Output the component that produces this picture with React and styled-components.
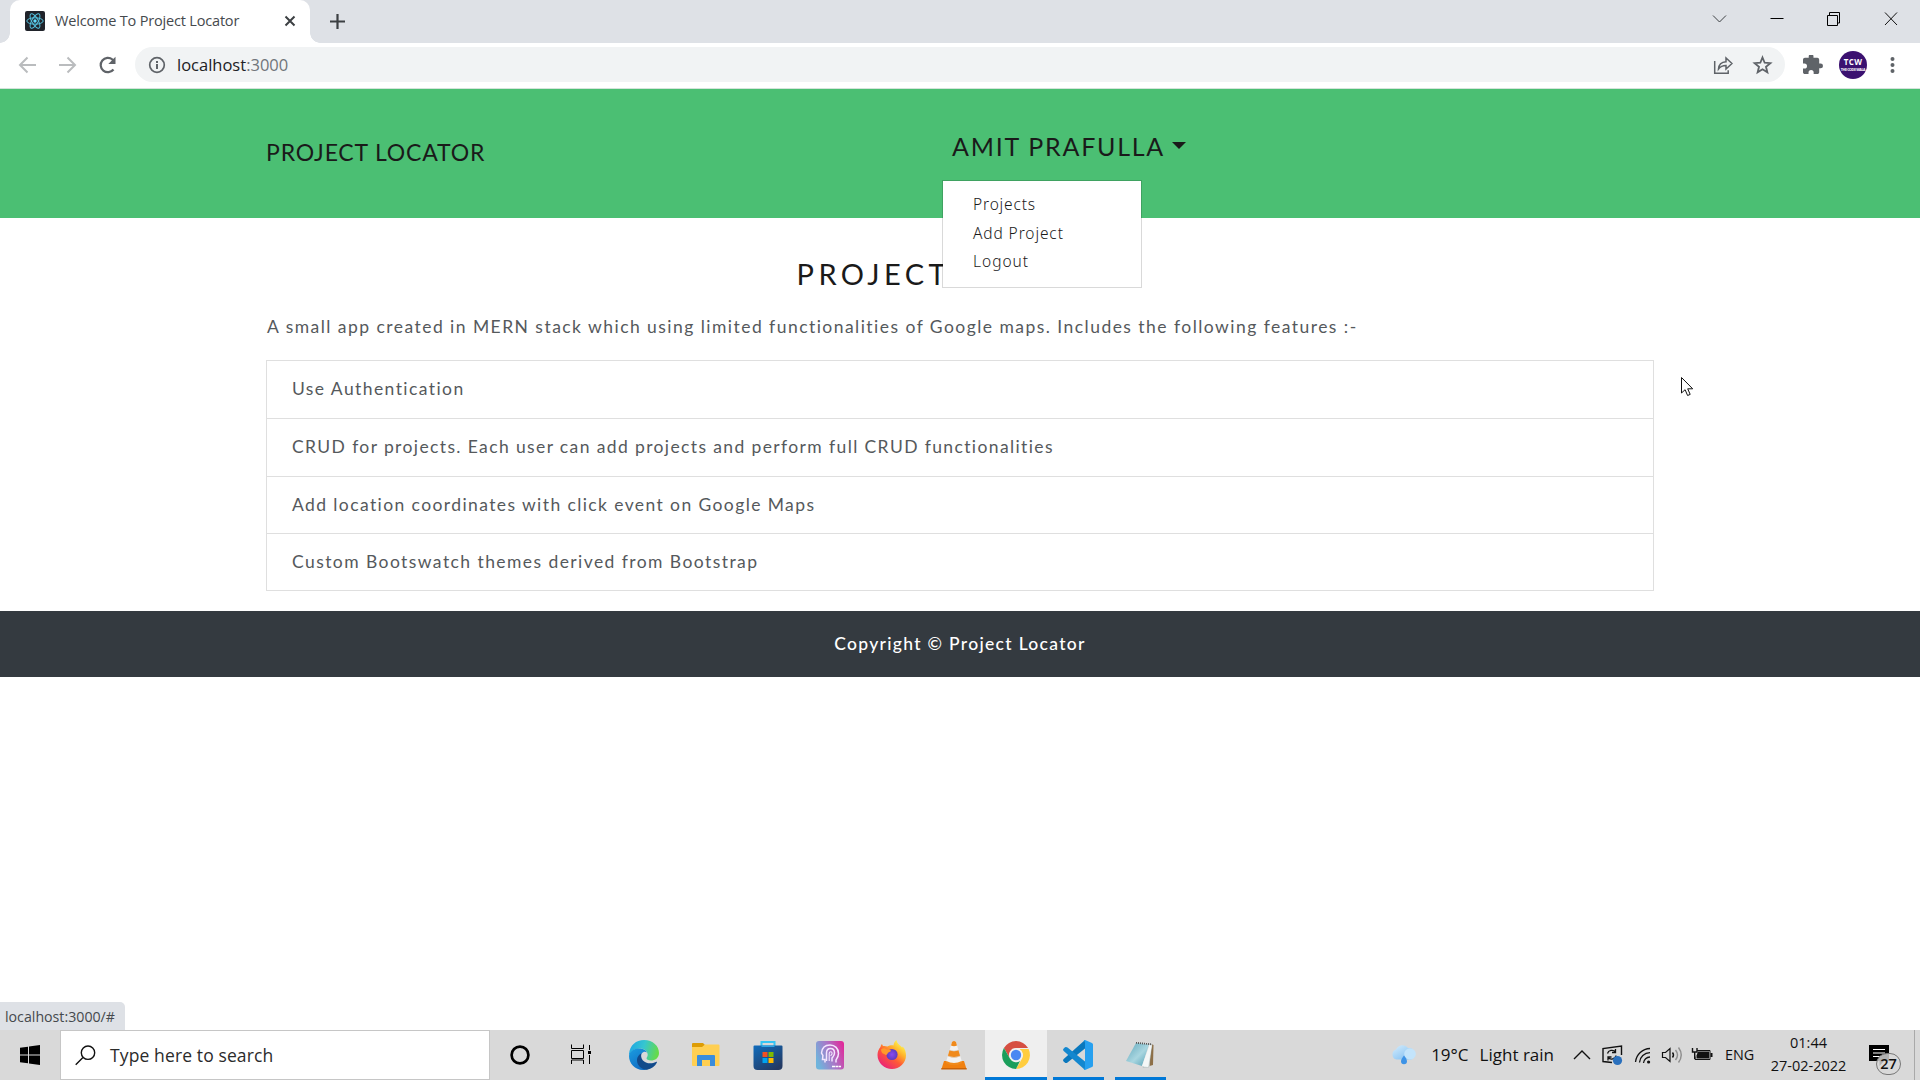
import React from "react";
import styled, { createGlobalStyle } from "styled-components";

const GlobalStyle = createGlobalStyle`
  * { box-sizing: border-box; }
  body { margin: 0; background: #fff; overflow: hidden; font-family: "Open Sans", "Noto Sans", sans-serif; }
  svg { display: block; flex: none; }
`;

const Screen = styled.div`
  display: flex;
  flex-direction: column;
  width: 1920px;
  height: 1080px;
  overflow: hidden;
`;

/* ---------- browser chrome ---------- */

const TabStrip = styled.header`
  display: flex;
  height: 43px;
  background: #dee1e6;
`;

const TabFoot = styled.span`
  align-self: flex-end;
  width: 10px;
  height: 10px;
  background: radial-gradient(circle at ${(p) => (p.$right ? "100% 0" : "0 0")}, #dee1e6 9.5px, #fff 10px);
`;

const Tab = styled.div`
  display: flex;
  align-items: center;
  width: 300px;
  height: 43px;
  padding: 0 14px 1px 15px;
  border-radius: 10px 10px 0 0;
  background: #fff;
`;

const TabTitle = styled.span`
  flex: 1;
  margin-left: 10px;
  font-size: 14.5px;
  line-height: 20px;
  letter-spacing: -0.18px;
  color: #45494d;
  white-space: nowrap;
`;

const NewTab = styled.div`
  padding: 13px 0 0 9px;
`;

const WindowControls = styled.div`
  display: flex;
  gap: 43px;
  margin-left: auto;
  padding: 11px 22px 0 0;
`;

const Toolbar = styled.div`
  display: flex;
  align-items: center;
  height: 46px;
  padding: 0 20px 2px 17px;
  border-bottom: 1px solid #d3e3da;
  background: #fff;
`;

const NavButtons = styled.div`
  display: flex;
  gap: 16px;
  width: 118px;
`;

const Omnibox = styled.div`
  display: flex;
  align-items: center;
  width: 1650px;
  height: 35px;
  padding: 1px 12px 0 12px;
  border-radius: 18px;
  background: #f1f3f4;
`;

const Address = styled.span`
  flex: 1;
  margin-left: 10px;
  font-size: 16.5px;
  line-height: 24px;
  color: #202124;
`;

const Port = styled.span`
  color: #70757a;
`;

const OmniActions = styled.div`
  display: flex;
  align-items: center;
  gap: 19px;
`;

const Extensions = styled.div`
  display: flex;
  align-items: center;
  margin-left: 18px;
`;

const Avatar = styled.div`
  display: flex;
  flex-direction: column;
  align-items: center;
  justify-content: center;
  width: 28px;
  height: 28px;
  margin: 0 22px 0 16px;
  border-radius: 50%;
  background: #3b1170;
  color: #fff;
`;

const AvatarName = styled.span`
  font-size: 8px;
  font-weight: 700;
  line-height: 10px;
  letter-spacing: 0.3px;
`;

const AvatarLine = styled.span`
  font-size: 3.6px;
  font-weight: 700;
  line-height: 6px;
  letter-spacing: -0.35px;
  white-space: nowrap;
`;

/* ---------- page ---------- */

const Page = styled.div`
  display: flex;
  flex-direction: column;
  height: 941px;
  font-family: Lato, "Open Sans", sans-serif;
`;

const Navbar = styled.nav`
  height: 129px;
  padding-left: 266px;
  background: #4bbf73;
  color: #1a1a1a;
`;

const NavGrid = styled.div`
  display: grid;
  grid-template-columns: 686px 240px;
  align-items: start;
  padding-top: 42px;
`;

const Brand = styled.div`
  margin-top: 6px;
  font-size: 23px;
  line-height: 30px;
  letter-spacing: 0.82px;
`;

const UserMenu = styled.div`
  position: relative;
`;

const UserToggle = styled.div`
  display: flex;
  align-items: center;
  font-size: 25px;
  line-height: 30px;
  letter-spacing: 1.75px;
  white-space: nowrap;
`;

const Caret = styled.span`
  width: 0;
  height: 0;
  margin: -1px 0 0 7px;
  border: 7.5px solid transparent;
  border-top-color: #1a1a1a;
  border-bottom: 0;
`;

const Dropdown = styled.div`
  position: absolute;
  top: 49px;
  left: -10px;
  width: 200px;
  height: 108px;
  padding: 9px 30px 0 30px;
  border: 1px solid rgba(0, 0, 0, 0.15);
  background: #fff;
  background-clip: padding-box;
  z-index: 2;
`;

const DropdownItem = styled.div`
  font-family: "Noto Sans", sans-serif;
  font-size: 15.5px;
  font-weight: 300;
  line-height: 28.6px;
  letter-spacing: ${(p) => p.$spacing}px;
  color: #1a1a1a;
`;

const Content = styled.main`
  width: 1388px;
  margin-left: 266px;
`;

const Heading = styled.h1`
  margin: 36px 0 0;
  font-size: 29px;
  font-weight: 400;
  line-height: 40px;
  letter-spacing: 4.4px;
  text-align: center;
  color: #1a1a1a;
`;

const Intro = styled.p`
  margin: 18px 0 0 1px;
  font-size: 17.5px;
  line-height: 30px;
  letter-spacing: 1.46px;
  color: #55595c;
  white-space: nowrap;
`;

const FeatureList = styled.ul`
  margin: 18px 0 0;
  padding: 0;
  list-style: none;
  border: 1px solid #dfdfdf;
`;

const Feature = styled.li`
  height: 57.25px;
  padding-left: 25px;
  font-size: 17.5px;
  line-height: 56px;
  letter-spacing: ${(p) => p.$spacing}px;
  color: #55595c;
  & + & { border-top: 1px solid #dfdfdf; }
`;

const Footer = styled.footer`
  height: 66px;
  margin-top: 20px;
  background: #343a40;
  color: #fff;
  font-size: 17.5px;
  font-weight: 500;
  line-height: 65px;
  letter-spacing: 1.3px;
  text-align: center;
`;

const StatusBubble = styled.div`
  width: 125px;
  height: 28px;
  margin-top: auto;
  padding-left: 5px;
  border-radius: 0 5px 0 0;
  background: #dee1e6;
  color: #45494d;
  font-family: "Open Sans", sans-serif;
  font-size: 14.2px;
  line-height: 29px;
`;

const Pointer = styled.div`
  position: absolute;
  left: 1680px;
  top: 376px;
`;

/* ---------- taskbar ---------- */

const Taskbar = styled.div`
  display: flex;
  height: 50px;
  background: #d9d9d9;
  color: #111;
`;

const StartButton = styled.div`
  display: flex;
  align-items: center;
  width: 60px;
  padding-left: 20px;
`;

const SearchBox = styled.div`
  display: flex;
  align-items: center;
  width: 430px;
  height: 50px;
  padding-left: 14px;
  border: 1px solid #c6c6c6;
  background: #fff;
`;

const SearchText = styled.span`
  margin-left: 14px;
  font-size: 17.5px;
  line-height: 24px;
  letter-spacing: 0.12px;
  color: #2b2b2b;
`;

const Apps = styled.div`
  display: flex;
  margin-left: -1px;
`;

const AppSlot = styled.div`
  display: flex;
  justify-content: center;
  width: 62px;
  height: 50px;
  background-color: ${(p) => (p.$active ? "#efefef" : "transparent")};
  background-image: ${(p) => (p.$open || p.$active ? "linear-gradient(#0078d7, #0078d7)" : "none")};
  background-size: ${(p) => (p.$active ? 62 : 51)}px 3px;
  background-position: ${(p) => (p.$active ? 0 : 6)}px 47px;
  background-repeat: no-repeat;
`;

const Tray = styled.div`
  display: flex;
  align-items: center;
  margin-left: auto;
  height: 50px;
`;

const Weather = styled.div`
  display: flex;
  align-items: center;
  margin-right: 19px;
  font-size: 17px;
  line-height: 24px;
`;

const Temperature = styled.span`
  margin: 0 11px 0 14px;
`;

const TrayIcons = styled.div`
  display: flex;
  align-items: center;
  width: 152px;
  justify-content: flex-start;
`;

const Language = styled.span`
  width: 45px;
  font-size: 14.4px;
  line-height: 20px;
`;

const Clock = styled.div`
  display: flex;
  flex-direction: column;
  align-items: center;
  width: 77px;
  font-size: 14.5px;
  line-height: 22.7px;
  white-space: nowrap;
`;

const Notifications = styled.div`
  position: relative;
  width: 34px;
  height: 50px;
  margin-left: 22px;
  padding-top: 15px;
`;

const Badge = styled.span`
  position: absolute;
  left: 7px;
  top: 23px;
  width: 25px;
  height: 22px;
  border: 1px solid #777;
  border-radius: 12px;
  background: rgba(217, 217, 217, 0.82);
  font-size: 14.5px;
  font-weight: 600;
  line-height: 20px;
  text-align: center;
`;

const ShowDesktop = styled.span`
  width: 6px;
  height: 50px;
  margin-left: 11px;
  border-left: 1px solid #a9a9a9;
`;

/* ---------- drawings ---------- */

const Favicon = () => (
  <svg width="20" height="20" viewBox="0 0 20 20" fill="none" stroke="#53c1de">
    <rect width="20" height="20" rx="2" fill="#20232a" stroke="none" />
    <ellipse cx="10" cy="10" rx="8.2" ry="3.2" />
    <ellipse cx="10" cy="10" rx="8.2" ry="3.2" transform="rotate(60 10 10)" />
    <ellipse cx="10" cy="10" rx="8.2" ry="3.2" transform="rotate(120 10 10)" />
    <circle cx="10" cy="10" r="1.7" fill="#61dafb" stroke="none" />
  </svg>
);

const Stroke = ({ w, h, d, c = "#3c4043", sw = 1 }) => (
  <svg width={w} height={h} viewBox={`0 0 ${w} ${h}`} fill="none" stroke={c} strokeWidth={sw}>
    <path d={d} />
  </svg>
);

const EdgeIcon = () => (
  <svg width="30" height="50" viewBox="0 -10 30 50">
    <defs>
      <linearGradient id="edgeTop" x1="0" y1="0.2" x2="1" y2="0.4">
        <stop offset="0" stopColor="#1ea5e4" />
        <stop offset="0.5" stopColor="#36c6d0" />
        <stop offset="1" stopColor="#66db48" />
      </linearGradient>
      <linearGradient id="edgeSide" x1="0" y1="0" x2="0.6" y2="1">
        <stop offset="0" stopColor="#1b9de0" />
        <stop offset="1" stopColor="#0f6cc4" />
      </linearGradient>
    </defs>
    <path d="M0 14C1 5 7 0 15 0c9 0 15 6 15 13 0 5-4 7.500-8 7.500-3 0-4.500-1.200-4.500-2.200 0-.8 1.200-1.300 1.200-3.500C18.700 11 15 8.500 11 8.500 5 8.500 1 12 0 16z" fill="url(#edgeTop)" />
    <path d="M0 16C.5 11 5 8.500 10 8.500c4.500 0 7 2 8 4-3-2-6.500.5-6.500 5C11.500 24 16 28 19 29c-2 .8-3 1-5 1C6 30 0 23.500 0 16z" fill="url(#edgeSide)" />
    <path d="M12.500 13.200C9 15 8 18 8 20.500c0 5 4.500 9 10 9.200 4.500-1 8-3.500 9.800-7 .4-.8-.2-1.200-.9-.8-4.400 2.400-10.400 1.600-13.200-1.700-1.700-2.200-1.900-5-1.200-7z" fill="#114a8b" />
  </svg>
);

const ExplorerIcon = () => (
  <svg width="28" height="50" viewBox="0 -13 28 50">
    <path d="M0 1a1 1 0 0 1 1-1h10l2 2v4H0z" fill="#dd9c05" />
    <path d="M0 4h10l3-2.500h13.500a1 1 0 0 1 1 1V22a1 1 0 0 1-1 1H1a1 1 0 0 1-1-1z" fill="#ffcf52" />
    <path d="M5 23V13a1 1 0 0 1 1-1h16a1 1 0 0 1 1 1v10h-5v-6h-8v6z" fill="#3a8ddb" />
  </svg>
);

const StoreIcon = () => (
  <svg width="30" height="50" viewBox="-.5 -11 30 50">
    <defs>
      <linearGradient id="bag" x1="0" y1="0" x2="0.7" y2="1">
        <stop offset="0" stopColor="#0f6cbd" />
        <stop offset="1" stopColor="#243a63" />
      </linearGradient>
    </defs>
    <path d="M8 6V1h13v5" fill="none" stroke="#35c5f4" strokeWidth="2" />
    <path d="M0 5.500a1 1 0 0 1 1-1h27a1 1 0 0 1 1 1V25a4 4 0 0 1-4 4H4a4 4 0 0 1-4-4z" fill="url(#bag)" />
    <path d="M8 5.200h13" stroke="#2fa8e6" strokeWidth="1.500" />
    <path d="M9 11h5v5H9z" fill="#f25022" />
    <path d="M15 11h5v5h-5z" fill="#7fba00" />
    <path d="M9 17h5v5H9z" fill="#00a4ef" />
    <path d="M15 17h5v5h-5z" fill="#ffb900" />
  </svg>
);

const MsiIcon = () => (
  <svg width="28" height="50" viewBox="0 -11 28 50">
    <defs>
      <linearGradient id="msi" x1="0" y1="0.6" x2="1" y2="0.2">
        <stop offset="0" stopColor="#6fb4dc" />
        <stop offset="0.5" stopColor="#a878c8" />
        <stop offset="1" stopColor="#e02a9a" />
      </linearGradient>
    </defs>
    <rect width="28" height="28.500" rx="3" fill="url(#msi)" />
    <g fill="none" stroke="#f4e6ff" strokeWidth="1.500">
      <path d="M9 21.500v-3H6.500l.4-4L5.500 12C6 6.500 9.500 4 14 4c5 0 8.500 3.500 8.500 8.500 0 3-1.500 5-2.500 6.500v2.500" />
      <path d="M10.500 20v-8c0-3 1.800-4.500 4-4.500s4 1.800 4 4.500-1.500 3.800-2.500 5v3.500" />
      <path d="M13.200 20v-7.500c0-1 .6-1.800 1.500-1.800s1.400.8 1.400 1.800-.8 1.500-1.400 2.300" strokeWidth="1.100" />
    </g>
    <path d="M16 25.500h9" stroke="#fff" strokeWidth="1.600" strokeDasharray="3 .5 2.500 .5" />
  </svg>
);

const FirefoxIcon = () => (
  <svg width="30" height="50" viewBox="-.5 -10 30 50">
    <defs>
      <linearGradient id="fox" x1="0.9" y1="0.05" x2="0.2" y2="0.95">
        <stop offset="0.08" stopColor="#fff44f" />
        <stop offset="0.35" stopColor="#ffb02a" />
        <stop offset="0.6" stopColor="#ff5a36" />
        <stop offset="1" stopColor="#e9207a" />
      </linearGradient>
      <radialGradient id="globe">
        <stop offset="0" stopColor="#8a4af0" />
        <stop offset="1" stopColor="#5b3cc0" />
      </radialGradient>
    </defs>
    <path d="M3 7c.2-1.500.8-2.300 1.500-3 .2 1 .7 1.600 1.200 2 1.500-.3 3 0 4.200.6C12 5 15 5 16 5.500 16.200 3 17.500 1 19 0c.5 4 3.500 5 5.500 7.500.6-.2.7-.6.7-1 2.500 2.500 3.300 6 3.300 9C28.500 23 22 29 14.500 29S0 23 0 15c0-3 1-6 3-8z" fill="url(#fox)" />
    <circle cx="14.500" cy="14.500" r="5.600" fill="url(#globe)" />
    <path d="M3.500 9.500c2-2 4.500-1.500 6 .2 2-.4 3.600.2 4 1.300-.8.900-2.500 1.400-3 1.800-.5.500-.2 1.500-1.500 2-1 1-1.500-1-3-1-1.500-.3-2.300-2.300-2.500-4.300z" fill="#ff9a2b" />
  </svg>
);

const VlcIcon = () => (
  <svg width="26" height="50" viewBox="0 -11 26 50">
    <path d="M3 20h20l2.500 8H.5z" fill="#f08010" />
    <path d="M.5 27h25l.3 1.600H.2z" fill="#c96208" />
    <path d="M11 1Q13-1 15 1l6 20q-8 5-16 0z" fill="#f2f2f2" />
    <path d="M11 1Q13-1 15 1l1 3.500q-3 1.500-6 0zM8.600 9q4.400 2 8.800 0l1.800 6q-6.200 3-12.400 0z" fill="#f08a1c" />
    <path d="M5.300 20l-.6 2q8.300 4.500 16.600 0l-.6-2q-7.700 4-15.400 0z" fill="#f08a1c" />
    <path d="M8.600 9q4.400 2 8.800 0M6.800 15q6.200 3 12.400 0" fill="none" stroke="#d5d5d5" strokeWidth=".6" />
  </svg>
);

const ChromeIcon = () => (
  <svg width="28" height="50" viewBox="-14 -25 28 50">
    <path d="M-12.100-7A14 14 0 0 1 12.100-7H0A7 7 0 0 0-6.100 3.500z" fill="#d64f42" />
    <path d="M12.600-6A14 14 0 0 1 0 14L6.100 3.500A7 7 0 0 0 3.500-6z" fill="#ffcd40" />
    <path d="M-12.100-7L-6.100 3.500A7 7 0 0 0 4 6L0 14A14 14 0 0 1-12.100-7z" fill="#1a9e5b" />
    <circle r="6.600" fill="#f1f1f1" />
    <circle r="5.200" fill="#4a88f2" />
  </svg>
);

const CodeIcon = () => (
  <svg width="30" height="50" viewBox="0 -10 30 50">
    <path d="M22 0v8.500L4.500 22.500Q3 23.500 2 22.700L.5 21.200q-1-1 .2-2.200z" fill="#0a78bd" />
    <path d="M22 30v-8.500L4.500 7.500Q3 6.500 2 7.300L.5 8.800q-1 1 .2 2.200z" fill="#1387cf" />
    <path d="M22 0l7 3q1 .5 1 1.600v20.800q0 1.100-1 1.600l-7 3q-.8.200-1.300-.4Q22 29 22 27V3q0-2-1.300-2.600.5-.6 1.300-.4z" fill="#27a0ef" />
  </svg>
);

const NotepadIcon = () => (
  <svg width="28" height="50" viewBox="0 -11.500 28 50">
    <defs>
      <linearGradient id="pad" x1="0" y1="0" x2="1" y2="1">
        <stop offset="0" stopColor="#5fa6ba" />
        <stop offset="0.55" stopColor="#a9d6e0" />
        <stop offset="1" stopColor="#4f9db3" />
      </linearGradient>
    </defs>
    <path d="M25 2.500l2.500 1-.5 20-3.500 1z" fill="#8d6f47" />
    <path d="M24 2l2 1-3 22.500-6 .5z" fill="#dfe6e6" stroke="#9aa" strokeWidth=".4" />
    <path d="M10 1.500L23 3 16 24.500 0 19.500z" fill="url(#pad)" />
    <path d="M23.500 3L16 24.500l6 1L25.800 4z" fill="#f4f7f7" />
    <path d="M10 1.300l15 1.500" stroke="#555" strokeWidth="1.800" strokeDasharray="1 1" />
  </svg>
);

const WeatherIcon = () => (
  <svg width="26" height="20" viewBox="0 0 26 20">
    <defs>
      <linearGradient id="cloud" x1="0" y1="0" x2="0.9" y2="1">
        <stop offset="0" stopColor="#d4edfd" />
        <stop offset="1" stopColor="#7dbcf0" />
      </linearGradient>
    </defs>
    <path d="M5.500 14.500A5.200 5.200 0 0 1 5 4.500 7 7 0 0 1 17 3a6 6 0 0 1 3 11.500z" fill="url(#cloud)" />
    <circle cx="19" cy="9" r="5.800" fill="#c3e4fb" />
    <path d="M13 10.500c1.500 2.200 3 4 3 5.800a3 3 0 0 1-6 0c0-1.800 1.500-3.600 3-5.800z" fill="#3d93e6" />
  </svg>
);

const SystemTrayDrawing = () => (
  <svg width="140" height="50" viewBox="1573 1030 140 50" fill="none" stroke="#111" strokeWidth="1.400">
    <path d="M1574 1059l8-8 8 8" />
    <path d="M1612 1062.500l-9-1v-13l18.500-2.500v9" />
    <path d="M1607.500 1053.500a4.500 4 0 0 1 8-1.500m0-3v3.500h-3.500M1616 1055.500a4.500 4 0 0 1-8 2m0 3v-3.500h3.500" strokeWidth="1.300" />
    <circle cx="1617.500" cy="1060.500" r="4.600" fill="#2a70bd" stroke="none" />
    <path d="M1635.500 1062a15 15 0 0 1 14.500-13.500M1639.500 1062.500a10.500 10.500 0 0 1 10.500-9.800M1643.500 1063a6.500 6.500 0 0 1 6.500-6" strokeWidth="1.300" />
    <circle cx="1648.600" cy="1062" r="1.600" fill="#111" stroke="none" />
    <path d="M1662.500 1052.500h3l4.500-4v13l-4.500-4h-3z" strokeWidth="1.200" />
    <path d="M1672.500 1052.500q2 2.500 0 5" />
    <path d="M1675.500 1050q4 5 0 10M1678.500 1047.500q5.500 7.500 0 15" stroke="#8e8e8e" />
    <path d="M1697 1050.500h13v9h-15v-3" strokeWidth="1" />
    <path d="M1698 1051.500h11v7h-12.500v-3z" fill="#111" stroke="none" />
    <path d="M1711.500 1053v4" strokeWidth="2" />
    <path d="M1692.500 1048v4h4.500v-4M1694.700 1052v7" />
  </svg>
);

const features = [
  ["Use Authentication", 1.42],
  ["CRUD for projects. Each user can add projects and perform full CRUD functionalities", 1.38],
  ["Add location coordinates with click event on Google Maps", 1.4],
  ["Custom Bootswatch themes derived from Bootstrap", 1.43],
];

const menu = [
  ["Projects", 0.85],
  ["Add Project", 0.9],
  ["Logout", 1],
];

export default function App() {
  return (
    <Screen>
      <GlobalStyle />
      <TabStrip>
        <TabFoot />
        <Tab>
          <Favicon />
          <TabTitle>Welcome To Project Locator</TabTitle>
          <Stroke w={12} h={12} d="M1.500 1.500l9 9M10.500 1.500l-9 9" sw={2} />
        </Tab>
        <TabFoot $right />
        <NewTab>
          <Stroke w={17} h={17} d="M8.500 1v15M1 8.500h15" sw={2.2} />
        </NewTab>
        <WindowControls>
          <Stroke w={15} h={15} d="M1 4.500l6.500 6.500 6.500-6.500" />
          <Stroke w={14} h={15} d="M.5 7.500h13" c="#000" />
          <Stroke w={14} h={15} d="M.5 4.500h10v10H.5zM2.500 4V1.500h10v10.500H11" c="#000" />
          <Stroke w={14} h={15} d="M1 1.500l12 12.500M13 1.500L1 14" c="#111" />
        </WindowControls>
      </TabStrip>
      <Toolbar>
        <NavButtons>
          <Stroke w={24} h={24} d="M19 12H3.500M10.500 4.500L3 12l7.500 7.500" c="#babcbe" sw={2} />
          <Stroke w={24} h={24} d="M2 12h15.500M10.500 4.500L18 12l-7.500 7.500" c="#babcbe" sw={2} />
          <svg width="24" height="24" viewBox="1 0 24 24">
            <path d="M17.500 16.500A7.200 7.200 0 1 1 16.500 6.500l1.500 1.800" fill="none" stroke="#5f6368" strokeWidth="2.200" />
            <path d="M19.500 3.800v7.200h-7.200z" fill="#5f6368" />
          </svg>
        </NavButtons>
        <Omnibox>
          <svg width="20" height="20" viewBox="0 0 20 20">
            <circle cx="10" cy="10" r="7.300" fill="none" stroke="#5f6368" strokeWidth="1.700" />
            <path d="M9 9h2v5H9zM9 6h2v2H9z" fill="#5f6368" />
          </svg>
          <Address>localhost<Port>:3000</Port></Address>
          <OmniActions>
            <svg width="20" height="20" viewBox="0 0 20 20" fill="none" stroke="#5f6368" strokeWidth="1.500">
              <path d="M1.700 6v12.200h13.500v-3M5.500 14c.3-4.500 2.500-7 7.500-7.300V3l6 5.500-6 5.500v-3.500c-3.500 0-5.700 1-7.500 3.500z" />
            </svg>
            <svg width="21" height="20" viewBox="0 0 24 24" fill="none" stroke="#5f6368" strokeWidth="2.200">
              <path d="M12 3l2.600 6.300 6.800.5-5.200 4.400 1.600 6.600-5.800-3.600-5.800 3.600 1.600-6.600-5.200-4.400 6.800-.5z" />
            </svg>
          </OmniActions>
        </Omnibox>
        <Extensions>
          <svg width="20" height="20" viewBox="2 2 21 21" fill="#5f6368">
            <path d="M20.500 11H19V7c0-1.100-.9-2-2-2h-4V3.500a2.500 2.500 0 0 0-5 0V5H4c-1.100 0-2 .9-2 2v3.800h1.500a2.700 2.700 0 0 1 0 5.400H2V20c0 1.100.9 2 2 2h3.800v-1.500a2.700 2.700 0 0 1 5.400 0V22H17c1.100 0 2-.9 2-2v-4h1.500a2.500 2.500 0 0 0 0-5z" />
          </svg>
          <Avatar>
            <AvatarName>TCW</AvatarName>
            <AvatarLine>THE CODE WALA</AvatarLine>
          </Avatar>
          <svg width="8" height="18" viewBox="0 0 8 18" fill="#5f6368">
            <circle cx="3.500" cy="3" r="2" />
            <circle cx="3.500" cy="9" r="2" />
            <circle cx="3.500" cy="15" r="2" />
          </svg>
        </Extensions>
      </Toolbar>

      <Page>
        <Navbar>
          <NavGrid>
            <Brand>PROJECT LOCATOR</Brand>
            <UserMenu>
              <UserToggle>
                AMIT PRAFULLA
                <Caret />
              </UserToggle>
              <Dropdown>
                {menu.map(([label, spacing]) => (
                  <DropdownItem key={label} $spacing={spacing}>{label}</DropdownItem>
                ))}
              </Dropdown>
            </UserMenu>
          </NavGrid>
        </Navbar>
        <Content>
          <Heading>PROJECT LOCATOR</Heading>
          <Intro>
            A small app created in MERN stack which using limited functionalities of Google maps. Includes the following features :-
          </Intro>
          <FeatureList>
            {features.map(([label, spacing]) => (
              <Feature key={label} $spacing={spacing}>{label}</Feature>
            ))}
          </FeatureList>
        </Content>
        <Footer>Copyright © Project Locator</Footer>
        <StatusBubble>localhost:3000/#</StatusBubble>
      </Page>

      <Pointer>
        <svg width="14" height="21" viewBox="0 0 14 21">
          <path d="M1.500 1.500v15.500l3.600-3.300 2.500 5.800 2.600-1.100-2.500-5.600h5z" fill="#fff" stroke="#111" />
        </svg>
      </Pointer>

      <Taskbar>
        <StartButton>
          <svg width="20" height="20" viewBox="0 0 20 20">
            <path d="M0 2.800l8-1.100V9.500H0zM9 1.500L20 0v9.500H9zM0 10.500h8v7.800l-8-1.100zM9 10.500h11V20L9 18.500z" fill="#000" />
          </svg>
        </StartButton>
        <SearchBox>
          <Stroke w={21} h={21} d="M8.200 12.300L.700 19.800M19.700 7.700a6.700 6.700 0 1 1-13.400 0a6.700 6.700 0 1 1 13.400 0" c="#111" sw={1.4} />
          <SearchText>Type here to search</SearchText>
        </SearchBox>
        <Apps>
          <AppSlot>
            <svg width="22" height="50" viewBox="-11 -25 22 50"><circle r="8.400" fill="none" stroke="#000" strokeWidth="2.700" /></svg>
          </AppSlot>
          <AppSlot>
            <svg width="24" height="50" viewBox="1 0 24 50" fill="none" stroke="#000">
              <path d="M2.500 14.500v4h12v-4M2.500 34v-4h12v4M2.500 20.500h12v8h-12zM20.500 15v5M20.500 25v9" />
              <path d="M19 21h3v3h-3z" fill="#000" stroke="none" />
            </svg>
          </AppSlot>
          <AppSlot><EdgeIcon /></AppSlot>
          <AppSlot><ExplorerIcon /></AppSlot>
          <AppSlot><StoreIcon /></AppSlot>
          <AppSlot><MsiIcon /></AppSlot>
          <AppSlot><FirefoxIcon /></AppSlot>
          <AppSlot><VlcIcon /></AppSlot>
          <AppSlot $active><ChromeIcon /></AppSlot>
          <AppSlot $open><CodeIcon /></AppSlot>
          <AppSlot $open><NotepadIcon /></AppSlot>
        </Apps>
        <Tray>
          <Weather>
            <WeatherIcon />
            <Temperature>19°C</Temperature>
            <span>Light rain</span>
          </Weather>
          <TrayIcons><SystemTrayDrawing /></TrayIcons>
          <Language>ENG</Language>
          <Clock>
            <span>01:44</span>
            <span>27-02-2022</span>
          </Clock>
          <Notifications>
            <svg width="20" height="21" viewBox="0 0 20 21">
              <path d="M0 0h20v16h-5l-4.500 5V16H0z" fill="#000" />
              <path d="M4 4.500h12M4 8h12M4 11.500h8" stroke="#fff" strokeWidth="1.200" />
            </svg>
            <Badge>27</Badge>
          </Notifications>
          <ShowDesktop />
        </Tray>
      </Taskbar>
    </Screen>
  );
}
